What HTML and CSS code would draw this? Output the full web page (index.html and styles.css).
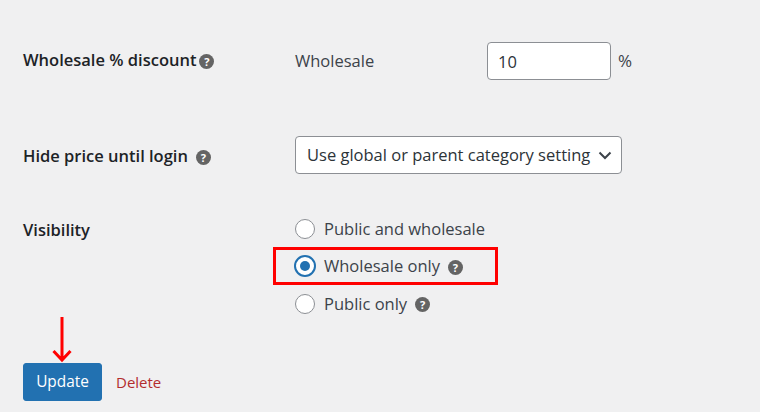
FILE: index.html
```html
<!DOCTYPE html>
<html lang="en">
<head>
  <meta charset="UTF-8">
  <title>Wholesale settings</title>
  <link rel="stylesheet" href="styles.css">
</head>
<body>
  <form class="settings">
    <div class="row row-discount">
      <div class="label">Wholesale % discount<span class="help help-tight">?</span></div>
      <div class="field">
        <span class="field-name">Wholesale</span>
        <input class="number" type="text" value="10">
        <span class="unit">%</span>
      </div>
    </div>

    <div class="row row-price">
      <div class="label">Hide price until login<span class="help">?</span></div>
      <div class="field">
        <div class="select">
          <span>Use global or parent category setting</span>
          <svg class="chevron" width="14" height="14" viewBox="0 0 14 14"><path d="M1.5 4.5 L7 10 L12.5 4.5" fill="none" stroke="#3c434a" stroke-width="2"/></svg>
        </div>
      </div>
    </div>

    <div class="row row-visibility">
      <div class="label">Visibility</div>
      <div class="radios">
        <div class="radio-row"><span class="radio"></span>Public and wholesale</div>
        <div class="radio-row highlight"><span class="radio checked"></span>Wholesale only<span class="help">?</span></div>
        <div class="radio-row"><span class="radio"></span>Public only<span class="help">?</span></div>
      </div>
    </div>

    <div class="actions">
      <svg class="arrow" width="24" height="46" viewBox="0 0 24 46"><path d="M12 0 V43 M3.5 34 L12 43 L20.5 34" fill="none" stroke="#f00" stroke-width="3"/></svg>
      <button class="update" type="button">Update</button>
      <a class="delete" href="#">Delete</a>
    </div>
  </form>
</body>
</html>
```

FILE: styles.css
```css
body {
  margin: 0;
  height: 412px;
  overflow: hidden;
  font-family: "Open Sans", "Noto Sans", Arial, sans-serif;
  font-size: 16.5px;
  line-height: 24px;
  background-color: #f0f0f1;
  color: #3c434a;
}
.settings {
  padding: 42px 0 0 23px;
}
.row {
  display: flex;
  align-items: flex-start;
}
.label {
  width: 272px;
  flex: none;
  display: flex;
  align-items: center;
  font-weight: 600;
  color: #1d2327;
}
.row-discount {
  height: 94px;
}
.row-discount .label {
  padding-top: 6px;
}
.row-price {
  height: 74px;
}
.row-price .label {
  padding-top: 8px;
}
.row-visibility {
  height: 153px;
}
.row-visibility .label {
  padding-top: 8px;
}
.field {
  display: flex;
  align-items: center;
}
.field-name {
  width: 192px;
}
.number {
  width: 124px;
  height: 38px;
  box-sizing: border-box;
  padding: 0 10px;
  border: 1px solid #8c8f94;
  border-radius: 4px;
  background: #fff;
  font: inherit;
  color: #2c3338;
}
.unit {
  margin-left: 7px;
  font-size: 17px;
}
.select {
  display: flex;
  align-items: center;
  justify-content: space-between;
  width: 327px;
  height: 38px;
  box-sizing: border-box;
  padding: 0 9px 0 11px;
  border: 1px solid #8c8f94;
  border-radius: 4px;
  background: #fff;
  color: #2c3338;
  white-space: nowrap;
}
.chevron {
  flex: none;
}
.help {
  flex: none;
  width: 15px;
  height: 15px;
  margin: 2px 0 0 8px;
  border-radius: 50%;
  background: #646464;
  color: #fff;
  font-size: 11px;
  font-weight: 700;
  line-height: 15px;
  text-align: center;
}
.help-tight {
  margin-left: 3px;
}
.radios {
  margin-left: -22px;
}
.radio-row {
  display: flex;
  align-items: center;
  height: 37px;
  box-sizing: border-box;
  padding-left: 22px;
  white-space: pre;
}
.radio {
  width: 20px;
  height: 20px;
  box-sizing: border-box;
  margin-right: 9px;
  border: 1px solid #8c8f94;
  border-radius: 50%;
  background: #fff;
}
.radio.checked {
  width: 22px;
  height: 22px;
  margin-left: -1px;
  margin-right: 8px;
  border: 2px solid #2271b1;
  position: relative;
}
.radio.checked::after {
  content: "";
  position: absolute;
  top: 4px;
  left: 4px;
  width: 10px;
  height: 10px;
  border-radius: 50%;
  background: #2271b1;
}
.highlight {
  width: 225px;
  height: 38px;
  border: 3px solid #f00;
  padding-left: 19px;
}
.actions {
  position: relative;
  display: flex;
  align-items: center;
  gap: 14px;
}
.arrow {
  position: absolute;
  left: 27px;
  top: -46px;
}
.update {
  width: 79px;
  height: 38px;
  border: 1px solid #2271b1;
  border-radius: 3px;
  background: #2271b1;
  color: #fff;
  font: inherit;
  font-size: 15.4px;
}
.delete {
  color: #b32d2e;
  font-size: 15px;
  text-decoration: none;
}
```
